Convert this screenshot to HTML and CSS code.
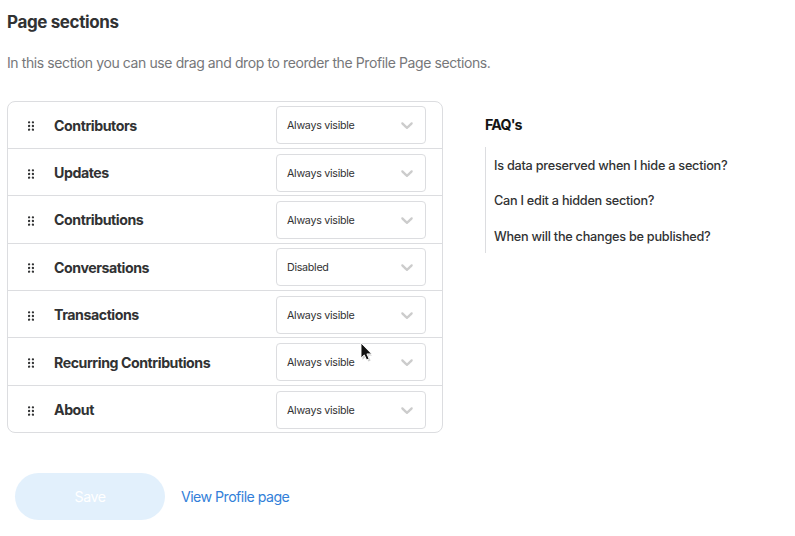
FILE: index.html
```html
<!DOCTYPE html>
<html lang="en">
<head>
<meta charset="utf-8">
<title>Page sections</title>
<link rel="stylesheet" href="styles.css">
</head>
<body>
<svg class="defs" width="0" height="0" aria-hidden="true">
<symbol id="grip" viewBox="0 0 6 10"><g fill="#313233"><circle cx="1.1" cy="1.3" r="1.15"/><circle cx="4.9" cy="1.3" r="1.15"/><circle cx="1.1" cy="5" r="1.15"/><circle cx="4.9" cy="5" r="1.15"/><circle cx="1.1" cy="8.7" r="1.15"/><circle cx="4.9" cy="8.7" r="1.15"/></g></symbol>
<symbol id="chevron" viewBox="0 0 20 20"><path fill="#ccc" d="M4.516 7.548c0.436-0.446 1.043-0.481 1.576 0l3.908 3.747 3.908-3.747c0.533-0.481 1.141-0.446 1.574 0 0.436 0.445 0.408 1.197 0 1.615-0.406 0.418-4.695 4.502-4.695 4.502-0.217 0.223-0.502 0.335-0.787 0.335s-0.57-0.112-0.789-0.335c0 0-4.287-4.084-4.695-4.502s-0.436-1.17 0-1.615z"/></symbol>
</svg>
<main class="page">
<h1 class="title">Page sections</h1>
<p class="intro">In this section you can use drag and drop to reorder the Profile Page sections.</p>
<div class="columns">
<div class="sections">
<div class="row"><svg class="grip"><use href="#grip"/></svg><span class="name">Contributors</span><div class="select"><span>Always visible</span><svg class="chevron"><use href="#chevron"/></svg></div></div>
<div class="row"><svg class="grip"><use href="#grip"/></svg><span class="name">Updates</span><div class="select"><span>Always visible</span><svg class="chevron"><use href="#chevron"/></svg></div></div>
<div class="row"><svg class="grip"><use href="#grip"/></svg><span class="name">Contributions</span><div class="select"><span>Always visible</span><svg class="chevron"><use href="#chevron"/></svg></div></div>
<div class="row"><svg class="grip"><use href="#grip"/></svg><span class="name">Conversations</span><div class="select"><span>Disabled</span><svg class="chevron"><use href="#chevron"/></svg></div></div>
<div class="row"><svg class="grip"><use href="#grip"/></svg><span class="name">Transactions</span><div class="select"><span>Always visible</span><svg class="chevron"><use href="#chevron"/></svg></div></div>
<div class="row"><svg class="grip"><use href="#grip"/></svg><span class="name">Recurring Contributions</span><div class="select"><span>Always visible</span><svg class="chevron"><use href="#chevron"/></svg></div></div>
<div class="row"><svg class="grip"><use href="#grip"/></svg><span class="name">About</span><div class="select"><span>Always visible</span><svg class="chevron"><use href="#chevron"/></svg></div></div>
</div>
<aside class="faq">
<h2 class="faq-title">FAQ's</h2>
<div class="faq-list">
<div>Is data preserved when I hide a section?</div>
<div>Can I edit a hidden section?</div>
<div>When will the changes be published?</div>
</div>
</aside>
</div>
<div class="actions"><button class="save" disabled>Save</button><a class="link">View Profile page</a></div>
</main>
<svg class="cursor" viewBox="0 0 14 20"><path d="M2.5 4 12 13.5H8.4l2.2 5-2.2 1-2.3-5.1-3.6 3.3z" fill="#999" opacity=".5"/><path d="M1 1v15l3.3-3.1 2.3 5 2.5-1.1-2.2-4.9h4.8z" fill="#111" stroke="#fff" stroke-width=".9"/></svg>
</body>
</html>
```
FILE: styles.css
```css
* { box-sizing: border-box; }
body {
  margin: 0;
  background: #fff;
  color: #313233;
  font-family: Inter, sans-serif;
}
.defs { position: absolute; }
.page { padding: 10px 7px 0; }
.title {
  margin: 0;
  font-size: 17px;
  line-height: 24px;
  font-weight: 700;
  letter-spacing: -0.38px;
}
.intro {
  margin: 18px 0 0;
  font-size: 14px;
  line-height: 22px;
  letter-spacing: -0.4px;
  color: #76777a;
}
.columns {
  display: flex;
  align-items: flex-start;
  gap: 42px;
  margin-top: 27px;
}
.sections {
  width: 436px;
  border: 1px solid #dcdde0;
  border-radius: 8px;
}
.row {
  display: flex;
  align-items: center;
  height: 47px;
  padding: 0 16px 0 20px;
  border-bottom: 1px solid #dcdde0;
}
.row:nth-child(3n) { height: 48px; padding-top: 1px; }
.row:nth-child(2), .row:nth-child(5), .row:last-child { padding-top: 2px; }
.row:last-child { height: 46px; border-bottom: 0; }
.grip { width: 6px; height: 10px; margin-top: 2px; }
.name {
  flex: 1;
  margin-left: 20px;
  font-size: 14.2px;
  line-height: 20px;
  font-weight: 700;
  letter-spacing: -0.46px;
}
.row:nth-child(3n + 1):not(:last-child) .name { padding-top: 1px; }
.row:nth-child(6) .name { padding-top: 2px; }
.select {
  display: flex;
  align-items: center;
  justify-content: space-between;
  width: 150px;
  height: 38px;
  padding: 0 8px 0 10px;
  border: 1px solid #dcdde0;
  border-radius: 4px;
  font-size: 10.7px;
  letter-spacing: -0.28px;
}
.chevron { width: 20px; height: 20px; }
.faq { padding-top: 14px; }
.faq-title {
  margin: 0;
  font-size: 14.2px;
  line-height: 20px;
  font-weight: 700;
  letter-spacing: -0.8px;
  color: #141414;
}
.faq-list {
  display: grid;
  grid-template-rows: 35px 35px 36px;
  align-items: center;
  margin-top: 12px;
  padding-left: 8px;
  border-left: 1px solid #dcdde0;
  font-size: 12.7px;
  line-height: 18px;
  font-weight: 500;
  letter-spacing: -0.25px;
}
.faq-list div { padding-top: 3px; }
.faq-list div:last-child { padding-top: 4px; }
.actions {
  display: flex;
  align-items: center;
  gap: 16px;
  margin: 40px 0 0 8px;
}
.save {
  width: 150px;
  height: 47px;
  border: 0;
  border-radius: 24px;
  background: #e2f0fc;
  color: #fff;
  font: 14.2px Inter, sans-serif;
  letter-spacing: -0.5px;
}
.link {
  font-size: 14.2px;
  letter-spacing: -0.55px;
  color: #337fd9;
}
.cursor {
  position: absolute;
  left: 360px;
  top: 342px;
  width: 14px;
  height: 20px;
}
```
